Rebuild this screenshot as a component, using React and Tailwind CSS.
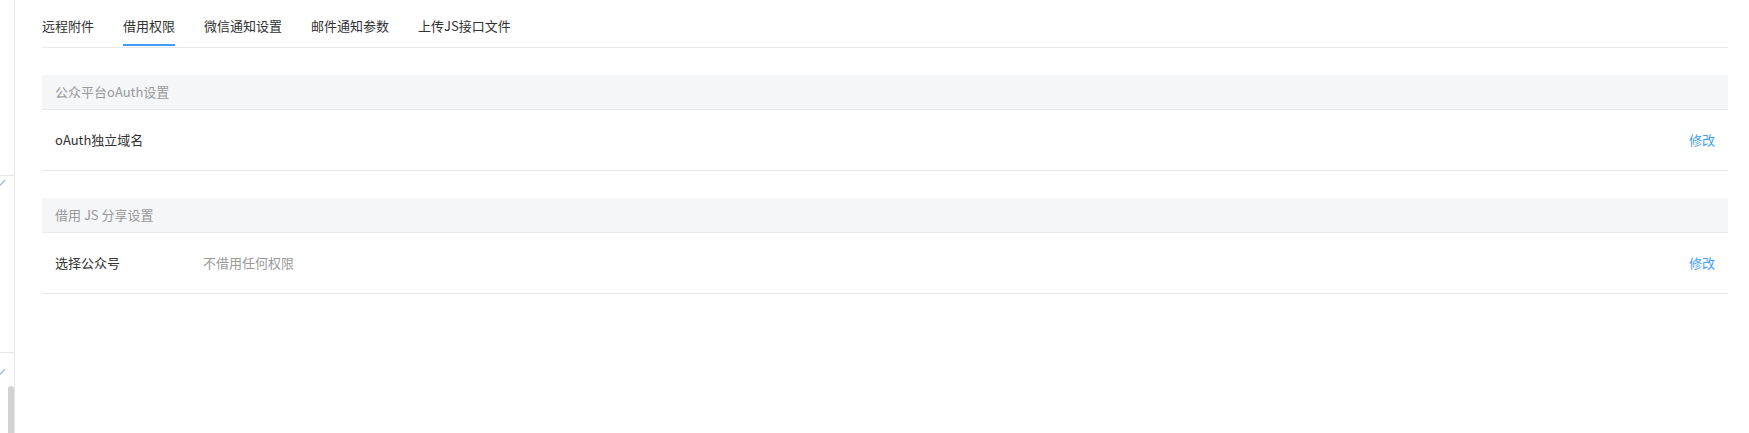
import React, { useState } from 'react';

const tabs = ['远程附件', '借用权限', '微信通知设置', '邮件通知参数', '上传JS接口文件'];

const sections = [
    { title: '公众平台oAuth设置', label: 'oAuth独立域名', value: '' },
    { title: '借用 JS 分享设置', label: '选择公众号', value: '不借用任何权限' },
];

// clipped tick from the collapsed side menu
const Tick = () => (
    <svg width="6" height="7" viewBox="0 0 6 7" className="block">
        <path d="M0 6.5 L5 1" stroke="#9fb7d6" strokeWidth="1.2" fill="none" />
    </svg>
);

const App = () => {
    const [activeTab, setActiveTab] = useState(1);

    return (
        <div
            className="flex h-[433px] w-full overflow-hidden bg-white text-[13px] text-[#333]"
            style={{ fontFamily: '"Microsoft YaHei", "Noto Sans CJK SC", "Noto Sans", sans-serif' }}
        >
            {/* side menu strip */}
            <div className="flex w-[15px] shrink-0 flex-col border-r border-[#e6e6e6]">
                <div className="h-[176px] shrink-0 border-b border-[#e6e6e6]" />
                <div className="h-[177px] shrink-0 border-b border-[#e6e6e6] pt-[3px]">
                    <Tick />
                </div>
                <div className="flex flex-1 flex-col pt-[15px]">
                    <Tick />
                    <div className="ml-[8px] mt-[11px] w-[6px] flex-1 rounded-t-[3px] bg-[#d2d2d2]" />
                </div>
            </div>

            {/* main content */}
            <div className="flex-1 pl-[27px] pr-[21px]">
                <div className="flex h-[48px] gap-[29px] border-b border-[#e8e8e8]">
                    {tabs.map((tab, i) => (
                        <button
                            key={tab}
                            onClick={() => setActiveTab(i)}
                            className={`relative h-full whitespace-nowrap leading-[52px] ${
                                activeTab === i ? 'text-[#303133]' : 'text-[#303133]'
                            }`}
                        >
                            {tab}
                            {activeTab === i && (
                                <span className="absolute bottom-[1px] left-0 h-[2px] w-full bg-[#409eff]" />
                            )}
                        </button>
                    ))}
                </div>

                {sections.map(section => (
                    <div key={section.title} className="mt-[27px]">
                        <div className="flex h-[35px] items-center border-b border-[#e8eaed] bg-[#f5f6f8] px-[13px] text-[#999]">
                            {section.title}
                        </div>
                        <div className="flex h-[61px] items-center border-b border-[#e8eaed] px-[13px]">
                            <span className="w-[148px] shrink-0">{section.label}</span>
                            <span className="flex-1 text-[#999]">{section.value}</span>
                            <a href="#" className="text-[#409eff]">修改</a>
                        </div>
                    </div>
                ))}
            </div>
        </div>
    );
};

export default App;
